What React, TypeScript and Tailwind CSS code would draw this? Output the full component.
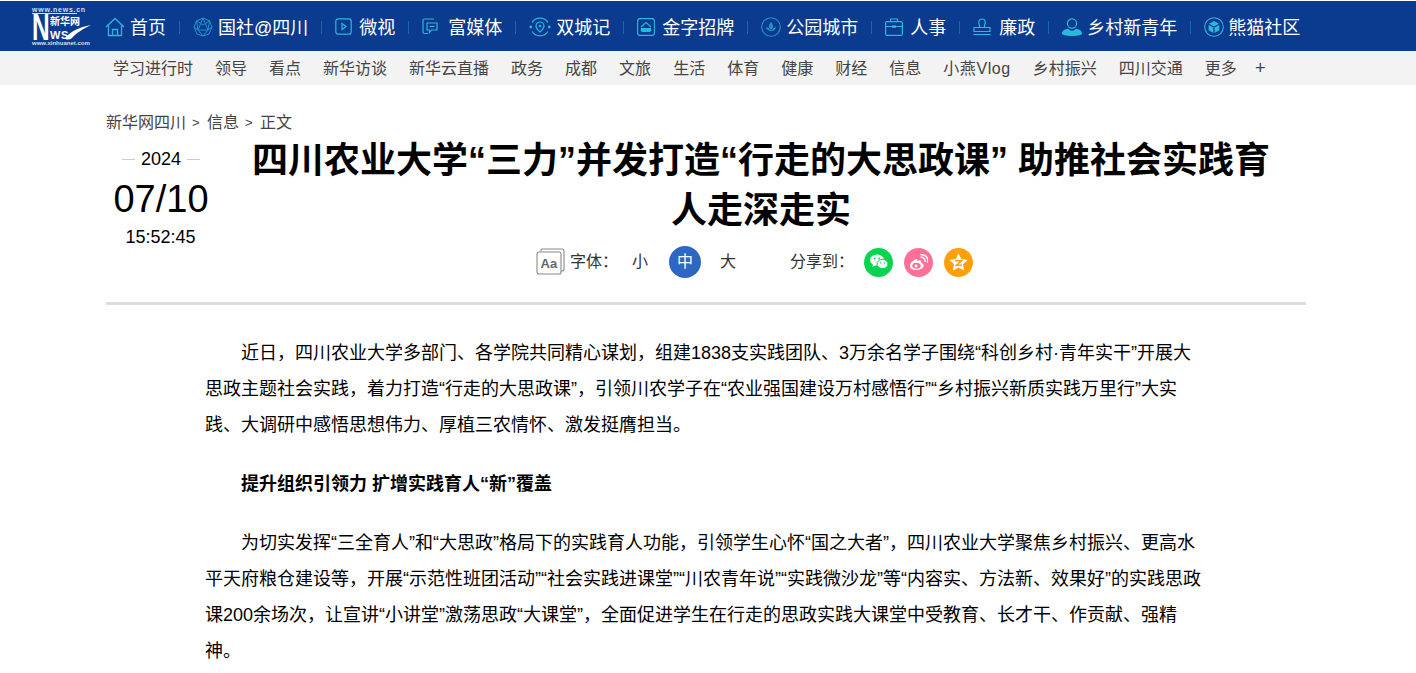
import { Fragment } from "react";

const font = "font-['Liberation_Sans','Noto_Sans_CJK_SC',sans-serif]";

function HomeIcon() {
  return (
    <svg width="20" height="20" viewBox="0 0 20 20" fill="none" stroke="#2bb8dc" strokeWidth="1.3">
      <path d="M1 10 10 1.5 19 10M3.5 8.5V18.5H16.5V8.5M7.5 18.5V12.5H12.5V18.5" />
    </svg>
  );
}

function GuosheIcon() {
  return (
    <svg width="20" height="20" viewBox="0 0 20 20" fill="none" stroke="#2293c9" strokeWidth="1">
      <path d="M10 1 16.5 3.8 19 10 16 17 10 19 4 17 1 10 3.5 3.8Z" />
      <path d="M10 1 15 13H5ZM1 10 5 13 10 19 15 13 19 10M3.5 3.8 10 8 16.5 3.8M3.5 3.8 5 13M16.5 3.8 15 13" />
    </svg>
  );
}

function PlayIcon() {
  return (
    <svg width="17" height="17" viewBox="0 0 17 17" fill="none" stroke="#2bb8dc" strokeWidth="1.2">
      <rect x="0.8" y="0.8" width="15.4" height="15.4" rx="2.5" />
      <path d="M7 5.5 11 8.5 7 11.5Z" />
    </svg>
  );
}

function MediaIcon() {
  return (
    <svg width="16" height="18" viewBox="0 0 16 18" fill="none" stroke="#2bb8dc" strokeWidth="1.2">
      <path d="M12 1H2.5Q1 1 1 2.5V14Q1 15.5 2.5 15.5H6" />
      <path d="M5 5H15V12H9.5L7.5 14.5V12H5Z" />
      <path d="M7.5 8.5H12.5" />
    </svg>
  );
}

function PinIcon() {
  return (
    <svg width="22" height="20" viewBox="0 0 22 20" fill="none" stroke="#2bb8dc" strokeWidth="1.2">
      <path d="M3 5.5A9.5 9.5 0 0 1 19 5.5M3 14.5A9.5 9.5 0 0 0 19 14.5" />
      <circle cx="1.8" cy="10" r="1.4" fill="#2bb8dc" stroke="none" />
      <circle cx="20.2" cy="10" r="1.4" fill="#2bb8dc" stroke="none" />
      <path d="M11 5A4 4 0 0 1 15 9C15 11.5 12.5 13.5 11 15 9.5 13.5 7 11.5 7 9A4 4 0 0 1 11 5Z" />
      <circle cx="11" cy="9" r="1.3" fill="#2bb8dc" stroke="none" />
    </svg>
  );
}

function GoldIcon() {
  return (
    <svg width="18" height="18" viewBox="0 0 18 18" fill="none" stroke="#2bb8dc" strokeWidth="1.1">
      <rect x="0.6" y="0.6" width="16.8" height="16.8" rx="2.5" />
      <path d="M4 9 9 4.5 14 9" />
      <path d="M3.8 10H14.2V12.2Q14.2 14 12.4 14H5.6Q3.8 14 3.8 12.2Z" fill="#2bb8dc" stroke="none" />
    </svg>
  );
}

function ParkIcon() {
  return (
    <svg width="20" height="20" viewBox="0 0 20 20" fill="none" stroke="#2293c9" strokeWidth="1.1">
      <circle cx="10" cy="10" r="9.3" />
      <path d="M10 5C11.5 6.5 12 8 12 9.5 12 11 11 12 10 12.5 9 12 8 11 8 9.5 8 8 8.5 6.5 10 5Z" fill="#2293c9" stroke="none" />
      <path d="M5 10.5C6.5 10 8 11 9 13H11C12 11 13.5 10 15 10.5 14.5 12.5 12.5 14 10 14 7.5 14 5.5 12.5 5 10.5Z" fill="#2293c9" stroke="none" />
    </svg>
  );
}

function CaseIcon() {
  return (
    <svg width="18" height="18" viewBox="0 0 18 18" fill="none" stroke="#2bb8dc" strokeWidth="1.2">
      <rect x="0.6" y="3.6" width="16.8" height="13.8" rx="1.5" />
      <path d="M5.5 3.5V1H12.5V3.5M0.6 8.5H7M11 8.5H17.4" />
      <rect x="7" y="7.3" width="4" height="2.5" fill="#2bb8dc" stroke="none" />
    </svg>
  );
}

function StampIcon() {
  return (
    <svg width="18" height="18" viewBox="0 0 18 18" fill="none" stroke="#2bb8dc" strokeWidth="1.2">
      <path d="M6.5 9.5V8C6.5 6.5 5.8 5.8 5.8 4.2A3.2 3.2 0 0 1 12.2 4.2C12.2 5.8 11.5 6.5 11.5 8V9.5" />
      <path d="M1 9.5H17V13.5H1Z" />
      <path d="M0.5 16.5H17.5" />
    </svg>
  );
}

function UserIcon() {
  return (
    <svg width="20" height="18" viewBox="0 0 20 18" fill="none">
      <circle cx="10" cy="5.5" r="4.6" stroke="#2bb8dc" strokeWidth="1.2" />
      <path d="M0 15.5C0 12.5 3.5 11 6 10.8 7 12 8.5 12.7 10 12.7 11.5 12.7 13 12 14 10.8 16.5 11 20 12.5 20 15.5 20 17 16 18 10 18 4 18 0 17 0 15.5Z" fill="#2bb8dc" />
    </svg>
  );
}

function PandaIcon() {
  return (
    <svg width="20" height="20" viewBox="0 0 20 20" fill="none">
      <circle cx="10" cy="10" r="9.3" stroke="#2bb8dc" strokeWidth="1.1" />
      <path d="M10 4 15 6.7 10 9.4 5 6.7Z" fill="#2bb8dc" />
      <path d="M4.6 7.8 9.4 10.4V16L4.6 13.3ZM15.4 7.8 10.6 10.4V16L15.4 13.3Z" fill="#2bb8dc" />
    </svg>
  );
}

function Logo() {
  return (
    <div className="relative w-[60px] h-[38px] text-white shrink-0">
      <div className="absolute left-0 top-0 text-[7px] leading-[5px] font-bold tracking-[0.75px] whitespace-nowrap text-[#d5dfee]">www.news.cn</div>
      <div className="absolute left-0 top-[6px] w-[45px] h-px bg-[#d5dfee]" />
      <svg className="absolute left-0 top-[7px] overflow-visible" width="18" height="26" viewBox="0 0 18 26" fill="#fff">
        <text transform="scale(0.68 1)" x="0" y="26" fontSize="36" fontWeight="700">N</text>
      </svg>
      <div className="absolute left-[18px] top-[8px] text-[10px] leading-[13px] font-bold whitespace-nowrap">新华网</div>
      <div className="absolute left-[18px] top-[23px] text-[11px] leading-[10px] font-bold tracking-[0.5px]">WS</div>
      <svg className="absolute left-[33px] top-[18px]" width="26" height="15" viewBox="0 0 26 15" fill="#fff">
        <path d="M0 13C5 7 14 2 26 0 18 4 11 8 7 13 4 15 1 15 0 13Z" />
      </svg>
      <div className="absolute left-0 top-[34px] w-[46px] text-[6px] leading-[4px] font-bold whitespace-nowrap text-[#d5dfee]">www.xinhuanet.com</div>
    </div>
  );
}

const topNav = [
  { label: "首页", icon: <HomeIcon />, gap: "gap-[5px]" },
  { label: "国社@四川", icon: <GuosheIcon />, gap: "gap-[5px]" },
  { label: "微视", icon: <PlayIcon />, gap: "gap-[7px]" },
  { label: "富媒体", icon: <MediaIcon />, gap: "gap-[10px]" },
  { label: "双城记", icon: <PinIcon />, gap: "gap-[5px]" },
  { label: "金字招牌", icon: <GoldIcon />, gap: "gap-[7px]" },
  { label: "公园城市", icon: <ParkIcon />, gap: "gap-[5px]" },
  { label: "人事", icon: <CaseIcon />, gap: "gap-[7px]" },
  { label: "廉政", icon: <StampIcon />, gap: "gap-[8px]" },
  { label: "乡村新青年", icon: <UserIcon />, gap: "gap-[5px]" },
  { label: "熊猫社区", icon: <PandaIcon />, gap: "gap-[4px]" },
];

const subNav = [
  "学习进行时", "领导", "看点", "新华访谈", "新华云直播", "政务", "成都", "文旅", "生活", "体育",
  "健康", "财经", "信息", "小燕Vlog", "乡村振兴", "四川交通", "更多",
];

function WeChat() {
  return (
    <svg width="18" height="16" viewBox="0 0 18 16" fill="#fff">
      <ellipse cx="7" cy="6" rx="7" ry="5.6" />
      <path d="M3 9.5 2.5 13 6 11Z" />
      <ellipse cx="12.5" cy="10" rx="5.5" ry="4.6" fill="#fff" stroke="#07d550" strokeWidth="1" />
      <circle cx="4.8" cy="4.5" r="0.9" fill="#07d550" />
      <circle cx="9" cy="4.5" r="0.9" fill="#07d550" />
      <circle cx="10.7" cy="9" r="0.7" fill="#07d550" />
      <circle cx="14.3" cy="9" r="0.7" fill="#07d550" />
    </svg>
  );
}

function Weibo() {
  return (
    <svg width="19" height="17" viewBox="0 0 19 17" fill="none">
      <path d="M7.5 5C3.8 6.3 0.8 9.3 1 12 1.2 15 5 16.5 8.5 16 12.5 15.5 15 13.3 14.6 11 14.3 9.7 13 9.3 12.2 9 12.8 7.5 12.4 6 10.3 6.2 9 6.3 8.5 6.8 7.8 7 8.2 5.6 8.3 4.8 7.5 5Z" fill="#fff" />
      <ellipse cx="7.5" cy="11.7" rx="4.2" ry="3" fill="#ff7096" />
      <circle cx="7" cy="12" r="1.4" fill="#fff" />
      <path d="M11.5 3.3C14.5 2.8 16.6 5.2 15.9 8M11.5 0.8C16.5 0 20 4 18.5 8.8" stroke="#fff" strokeWidth="1.5" />
    </svg>
  );
}

function Qzone() {
  return (
    <svg width="19" height="18" viewBox="0 0 19 18" fill="none">
      <path d="M9.5 0.5 12.3 6 18.5 6.9 14 11.2 15.1 17.4 9.5 14.5 3.9 17.4 5 11.2 0.5 6.9 6.7 6Z" fill="#fff" />
      <path d="M6 7.8H12.6L7.4 12.2H13" stroke="#ffa008" strokeWidth="1.5" />
    </svg>
  );
}

function FontIcon() {
  return (
    <svg width="30" height="28" viewBox="0 0 30 28" fill="none" stroke="#8a8a8a" strokeWidth="1.1">
      <path d="M5 3.5V2Q5 1 6 1H26Q28 1 28 3V21Q28 23 26 23H25" />
      <rect x="1" y="4" width="24" height="22" rx="2" fill="#fff" />
      <text x="4.5" y="20" fontSize="13" fontWeight="700" fill="#666" stroke="none">Aa</text>
    </svg>
  );
}

const body1 = "近日，四川农业大学多部门、各学院共同精心谋划，组建1838支实践团队、3万余名学子围绕“科创乡村·青年实干”开展大思政主题社会实践，着力打造“行走的大思政课”，引领川农学子在“农业强国建设万村感悟行”“乡村振兴新质实践万里行”大实践、大调研中感悟思想伟力、厚植三农情怀、激发挺膺担当。";
const body2 = "为切实发挥“三全育人”和“大思政”格局下的实践育人功能，引领学生心怀“国之大者”，四川农业大学聚焦乡村振兴、更高水平天府粮仓建设等，开展“示范性班团活动”“社会实践进课堂”“川农青年说”“实践微沙龙”等“内容实、方法新、效果好”的实践思政课200余场次，让宣讲“小讲堂”激荡思政“大课堂”，全面促进学生在行走的思政实践大课堂中受教育、长才干、作贡献、强精神。";

export default function App() {
  return (
    <div className={`${font} bg-white h-[673px] overflow-hidden`}>
      {/* blue bar starts one pixel down in the reference */}
      <header className="bg-[#0a3b8f] h-[50px] mt-[1px] flex items-center pl-[32px]">
        <Logo />
        <nav className="flex items-center ml-[13px] pt-[3px]">
          {topNav.map((item, i) => (
            <Fragment key={item.label}>
              {i > 0 && <span className="w-px h-[13px] bg-[#14699f] mx-[13px]" />}
              <a className={`flex items-center ${item.gap} text-white text-[18px] leading-[24px] whitespace-nowrap`}>
                <span className="-translate-y-[1px]">{item.icon}</span>
                {item.label}
              </a>
            </Fragment>
          ))}
        </nav>
      </header>

      <div className="bg-[#f3f3f3] h-[34px] pt-[1px] flex items-center pl-[113px] gap-[22px] text-[16px] text-[#444] whitespace-nowrap">
        {subNav.map((s) => (
          <a key={s} className={s === "小燕Vlog" ? "tracking-[0.6px]" : ""}>{s}</a>
        ))}
        <span className="text-[#444] text-[18px] -ml-[4px]">+</span>
      </div>

      <main className="w-[1200px] ml-[106px] pt-[27px]">
        <div className="flex items-center gap-[6px] text-[16px] leading-[22px] text-[#444] whitespace-nowrap">
          <span>新华网四川</span>
          <span className="w-[9px] text-[13px]">&gt;</span>
          <span>信息</span>
          <span className="w-[9px] text-[13px]">&gt;</span>
          <span>正文</span>
        </div>

        <div className="flex h-[100px] mt-[2px]">
          <div className="w-[110px] shrink-0 flex flex-col items-center text-black">
            <div className="flex items-center gap-[6px] text-[18px] leading-[20px] mt-[13px]">
              <span className="w-[13px] h-px bg-[#ccc]" />
              2024
              <span className="w-[13px] h-px bg-[#ccc]" />
            </div>
            <div className="text-[38px] leading-[40px] mt-[10px]">07/10</div>
            <div className="text-[18px] leading-[22px] mt-[7px] -ml-[1px]">15:52:45</div>
          </div>
          <div className="flex-1 pl-[26px] pr-[26px]">
            <h1 className="text-[36px] leading-[50px] font-bold text-black text-center">
              四川农业大学“三力”并发打造“行走的大思政课” 助推社会实践育人走深走实
            </h1>
          </div>
        </div>

        <div className="flex items-center h-[32px] mt-[10px] text-[16px] text-[#333] pl-[430px] whitespace-nowrap">
          <FontIcon />
          <span className="ml-[4px]">字体：</span>
          <span className="ml-[14px] w-[16px]">小</span>
          <span className="ml-[21px] w-[32px] h-[32px] rounded-full bg-[#2d66c3] text-white flex items-center justify-center">中</span>
          <span className="ml-[19px] w-[16px]">大</span>
          <span className="ml-[54px]">分享到：</span>
          <span className="ml-[10px] w-[29px] h-[29px] rounded-full bg-[#07d550] flex items-center justify-center"><WeChat /></span>
          <span className="ml-[11px] w-[29px] h-[29px] rounded-full bg-[#ff7096] flex items-center justify-center"><Weibo /></span>
          <span className="ml-[11px] w-[29px] h-[29px] rounded-full bg-[#ffa008] flex items-center justify-center"><Qzone /></span>
        </div>

        <div className="h-[3px] bg-[#dcdcdc] mt-[24px]" />

        <article className="w-[1000px] ml-[99px] mt-[30px] text-[18px] leading-[36px] text-black">
          <p className="indent-[36px] mb-[23px]">{body1}</p>
          <p className="indent-[36px] mb-[23px] font-bold">提升组织引领力 扩增实践育人“新”覆盖</p>
          <p className="indent-[36px]">{body2}</p>
        </article>
      </main>
    </div>
  );
}
